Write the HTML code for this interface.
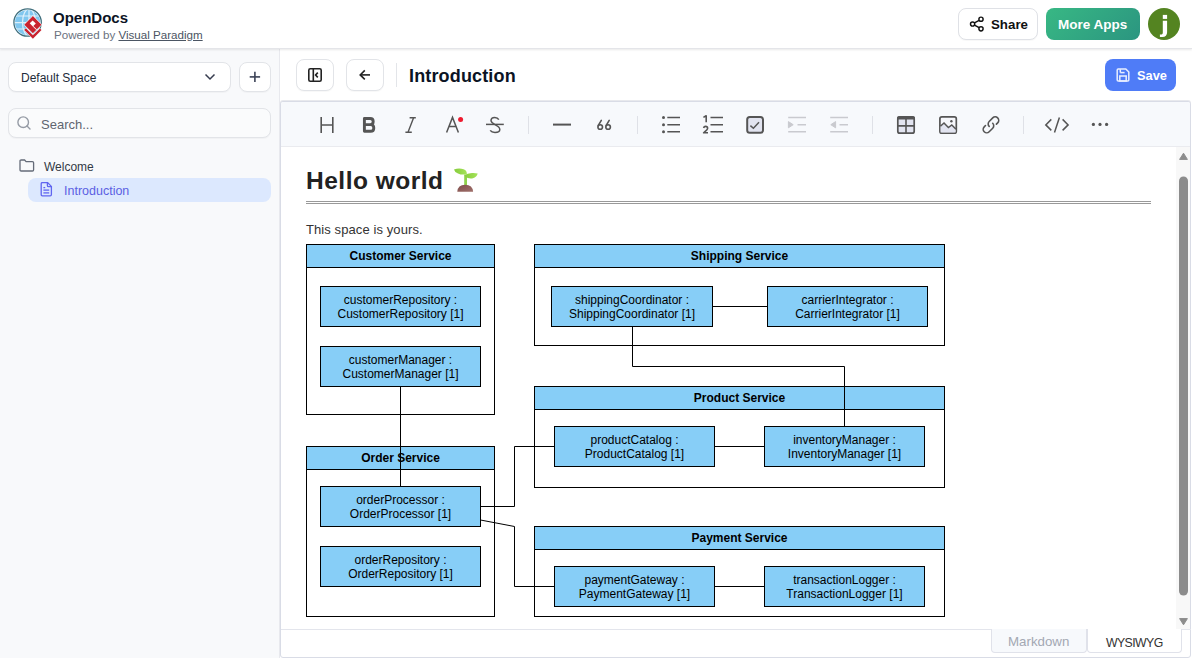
<!DOCTYPE html>
<html><head><meta charset="utf-8">
<style>
*{box-sizing:border-box;margin:0;padding:0}
html,body{width:1192px;height:658px;overflow:hidden;background:#fff;font-family:"Liberation Sans",sans-serif;color:#1f2937}
.abs{position:absolute}
.t{position:absolute;white-space:nowrap;line-height:1}
#header{position:absolute;left:0;top:0;width:1192px;height:49px;background:#fff;border-bottom:1px solid #e4e5e9;box-shadow:0 1px 2px rgba(0,0,0,.09);z-index:2}
#sidebar{position:absolute;left:0;top:49px;width:280px;height:609px;background:#f8f9fb;border-right:1px solid #e8e9ee}
.btn{position:absolute;border:1px solid #e2e4e8;border-radius:8px;background:#fff;box-shadow:0 1px 1px rgba(0,0,0,.03)}
#editor{position:absolute;left:280px;top:101px;width:911px;height:557px;border:1px solid #d9dce6;border-radius:3px;box-shadow:0 -1px 0 #e8e9ed;background:#fff;overflow:hidden}
#toolbar{position:absolute;left:0;top:0;width:910px;height:45px;background:#f7f9fc;border-bottom:1px solid #eaebef}
.div{position:absolute;top:15px;width:1px;height:18px;background:#e1e3e9}
</style></head>
<body>
<div id="header">
  <svg class="abs" style="left:10px;top:5px" width="36" height="36" viewBox="10 5 36 36">
    <defs><clipPath id="gc"><circle cx="27.6" cy="22.5" r="12.6"/></clipPath></defs>
    <circle cx="27.6" cy="22.5" r="13.7" fill="#fff" stroke="#41707e" stroke-width="1.3"/>
    <circle cx="27.6" cy="22.5" r="12.6" fill="#80c7ef"/>
    <g clip-path="url(#gc)" stroke="#dff1fb" stroke-width="1.2" fill="none">
      <ellipse cx="29" cy="22.5" rx="6.5" ry="13.5"/>
      <line x1="29" y1="8" x2="29" y2="37"/>
      <line x1="12" y1="16" x2="42" y2="16"/>
      <line x1="12" y1="22.6" x2="42" y2="22.6"/>
      <line x1="12" y1="29" x2="42" y2="29"/>
    </g>
    <g transform="translate(32.9 24.7) rotate(45)">
      <path d="M-2.6 7.1 H7.1 V-2.5 H10.3 V10.3 H-2.6 Z" fill="#fff"/>
      <rect x="-6.6" y="-6.6" width="13.2" height="13.2" fill="#fff"/>
      <rect x="-6.1" y="-6.1" width="12.2" height="12.2" fill="#c9232f"/>
      <rect x="-3.2" y="-2.9" width="4.4" height="4.2" fill="#fff"/>
      <rect x="1.2" y="0.5" width="5" height="0.8" fill="#fff"/>
      <path d="M-2.4 7.5 H7.5 V-2.3 H9.9 V9.9 H-2.4 Z" fill="#c9232f"/>
    </g>
  </svg>
  <div class="t" style="left:53px;top:10px;font-size:15px;font-weight:bold;color:#0b1324">OpenDocs</div>
  <div class="t" style="left:54px;top:29px;font-size:11.6px;color:#6b7280">Powered by <span style="text-decoration:underline;color:#4b5563">Visual Paradigm</span></div>
  <div class="btn" style="left:958px;top:8px;width:80px;height:32px;border-color:#dfe1e6"></div>
  <svg class="abs" style="left:969px;top:16px" width="16" height="16" viewBox="0 0 16 16" fill="none" stroke="#111" stroke-width="1.45">
    <circle cx="12" cy="3.2" r="2.1"/><circle cx="3.6" cy="8" r="2.1"/><circle cx="12" cy="12.8" r="2.1"/>
    <line x1="5.5" y1="6.9" x2="10.1" y2="4.3"/><line x1="5.5" y1="9.1" x2="10.1" y2="11.7"/>
  </svg>
  <div class="t" style="left:991px;top:18px;font-size:13.3px;font-weight:bold;color:#111">Share</div>
  <div class="abs" style="left:1046px;top:8px;width:94px;height:32px;border-radius:8px;background:linear-gradient(135deg,#38b884,#2b9580)"></div>
  <div class="t" style="left:1058px;top:18px;font-size:13.5px;font-weight:bold;color:#fff">More Apps</div>
  <div class="abs" style="left:1148px;top:8px;width:32px;height:32px;border-radius:50%;background:#548421"></div>
  <svg class="abs" style="left:1148px;top:8px" width="32" height="32" viewBox="1148 8 32 32"><rect x="1162.8" y="14.9" width="4.3" height="4" fill="#fff"/><path d="M1162.8 20.8 H1167.1 V32.2 Q1167.1 36.9 1162.3 36.9 H1159.9 V34.6 H1161.6 Q1162.8 34.6 1162.8 32.8 Z" fill="#fff"/></svg>
</div>

<div id="sidebar">
  <div class="btn" style="left:8px;top:13px;width:223px;height:30px"></div>
  <div class="t" style="left:21px;top:23px;font-size:12px;color:#222b3a">Default Space</div>
  <svg class="abs" style="left:204px;top:24px" width="12" height="8" viewBox="0 0 12 8" fill="none" stroke="#363c4e" stroke-width="1.5"><polyline points="1.5,1.5 6,6 10.5,1.5"/></svg>
  <div class="btn" style="left:239px;top:13px;width:32px;height:30px"></div>
  <svg class="abs" style="left:248px;top:21px" width="14" height="14" viewBox="0 0 14 14" stroke="#3b4256" stroke-width="1.6"><line x1="6.9" y1="1.7" x2="6.9" y2="12.1"/><line x1="1.7" y1="6.9" x2="12.1" y2="6.9"/></svg>
  <div class="btn" style="left:8px;top:59px;width:263px;height:30px;background:#fafbfc"></div>
  <svg class="abs" style="left:16px;top:66px" width="16" height="16" viewBox="0 0 16 16" fill="none" stroke="#959ba5" stroke-width="1.4"><circle cx="7.2" cy="7.2" r="5.3"/><line x1="11" y1="11" x2="14" y2="14" stroke-linecap="round"/></svg>
  <div class="t" style="left:41px;top:69px;font-size:13px;color:#5f6570">Search...</div>
  <svg class="abs" style="left:18.5px;top:110px" width="16" height="13" viewBox="0 0 16 13" fill="none" stroke="#646b78" stroke-width="1.3"><path d="M1 2.2 Q1 1 2.2 1 H5.6 L7.1 2.6 H13.4 Q14.6 2.6 14.6 3.8 V10.8 Q14.6 12 13.4 12 H2.2 Q1 12 1 10.8 Z"/></svg>
  <div class="t" style="left:44px;top:112px;font-size:12px;color:#333a45">Welcome</div>
  <div class="abs" style="left:28px;top:129px;width:243px;height:24px;border-radius:8px;background:#dce8fe"></div>
  <svg class="abs" style="left:40px;top:133px" width="13" height="15" viewBox="0 0 13 15" fill="none" stroke="#6065f0" stroke-width="1.3"><path d="M1.2 1.8 Q1.2 .6 2.4 .6 H7.6 L11.4 4.4 V12.6 Q11.4 13.8 10.2 13.8 H2.4 Q1.2 13.8 1.2 12.6 Z"/><path d="M7.4 .8 V3.4 Q7.4 4.6 8.6 4.6 H11.2"/><line x1="3.4" y1="5.6" x2="5.2" y2="5.6"/><line x1="3.4" y1="8.1" x2="9.2" y2="8.1"/><line x1="3.4" y1="10.9" x2="9.2" y2="10.9"/></svg>
  <div class="t" style="left:64px;top:136px;font-size:12.5px;color:#5b5fe3">Introduction</div>
</div>

<!-- main top bar -->
<div class="btn" style="left:296px;top:59px;width:38px;height:32px"></div>
<svg class="abs" style="left:307px;top:67px" width="16" height="16" viewBox="0 0 16 16" fill="none" stroke="#222" stroke-width="1.6"><rect x="1.8" y="1.8" width="12.4" height="12.4" rx="1.5"/><line x1="6.3" y1="2" x2="6.3" y2="14"/><polyline points="10.8,5.6 8.6,8 10.8,10.4"/></svg>
<div class="btn" style="left:346px;top:59px;width:38px;height:32px"></div>
<svg class="abs" style="left:357px;top:67px" width="16" height="16" viewBox="0 0 16 16" fill="none" stroke="#222" stroke-width="1.6"><line x1="3.2" y1="7.9" x2="13" y2="7.9"/><polyline points="7.8,3.4 3.2,7.9 7.8,12.4"/></svg>
<div class="abs" style="left:396px;top:63px;width:1px;height:24px;background:#e3e5e9"></div>
<div class="t" style="left:409px;top:67px;font-size:18px;font-weight:bold;color:#0b1324;letter-spacing:0.15px">Introduction</div>
<div class="abs" style="left:1105px;top:59px;width:71px;height:32px;border-radius:8px;background:#4f7cf7"></div>
<svg class="abs" style="left:1115px;top:67px" width="16" height="16" viewBox="0 0 16 16" fill="none" stroke="#e8eeff" stroke-width="1.5"><path d="M2.2 3 Q2.2 2 3.2 2 H10.8 L13.8 5 V13 Q13.8 14 12.8 14 H3.2 Q2.2 14 2.2 13 Z"/><rect x="4.8" y="9" width="6.4" height="5"/><line x1="5.3" y1="2.2" x2="5.3" y2="5.6"/><line x1="5.3" y1="5.6" x2="9.6" y2="5.6"/></svg>
<div class="t" style="left:1137px;top:69.5px;font-size:12.8px;font-weight:bold;color:#fff">Save</div>

<div id="editor">
  <div id="toolbar">
  </div>
</div>
<svg class="abs" style="left:281px;top:101px" width="910" height="45" viewBox="281 101 910 45" fill="none" stroke="#555" stroke-width="1.5">
<!-- H -->
<path d="M321.2 117 V133 M332.8 117 V133 M321.2 125 H332.8" stroke-width="1.6"/>
<!-- B -->
<path d="M364.4 118.5 H370.2 Q373.2 118.5 373.2 121.5 Q373.2 124.6 370.2 124.6 H364.4 Z M364.4 124.6 H370.6 Q373.8 124.6 373.8 127.9 Q373.8 131.3 370.6 131.3 H364.4 Z" stroke-width="2.9" stroke-linejoin="round"/>
<!-- I -->
<path d="M409.6 117.7 H415.8 M405.4 132.2 H411.8 M413.6 117.7 L408 132.2" stroke-width="1.4"/>
<!-- A -->
<path d="M446.6 132.4 L452.5 117.4 L458.4 132.4 M448.7 126.6 H456.3" stroke-width="1.5"/>
<circle cx="460.6" cy="119.5" r="2.5" fill="#ee1b2f" stroke="none"/>
<!-- S strike -->
<path d="M486 124.4 H503.8" stroke-width="1.5"/>
<path d="M498.8 119.6 Q497.6 117.4 494.8 117.4 Q491 117.4 491 120.6 Q491 122.4 494.6 124.4 Q499.8 127 499.8 129.4 Q499.8 132.4 495 132.4 Q491.6 132.4 490.2 130.4" stroke-width="1.5"/>
<!-- divider -->
<path d="M528.5 116 V134" stroke="#dfe1e7" stroke-width="1"/>
<!-- hr -->
<path d="M553 124.6 H571" stroke-width="2"/>
<!-- divider -->
<path d="M637.5 116 V134" stroke="#dfe1e7" stroke-width="1"/>
<!-- bullet list -->
<g fill="#555" stroke="none"><circle cx="663.5" cy="117.5" r="1.5"/><circle cx="663.5" cy="124.7" r="1.5"/><circle cx="663.5" cy="131.7" r="1.5"/></g>
<path d="M667.3 117.5 H680 M667.3 124.7 H680 M667.3 131.7 H680" stroke-width="1.6"/>
<!-- ordered list -->
<path d="M710.5 117.5 H723 M710.5 124.7 H723 M710.5 131.7 H723" stroke-width="1.6"/>
<path d="M703.4 117.4 L706.2 115.8 V122.3" stroke-width="1.6" stroke-linejoin="round"/>
<path d="M703.6 128 Q704 126.4 705.6 126.4 Q707.6 126.4 707.6 128.2 Q707.6 129.6 703.6 132.8 H708" stroke-width="1.6" stroke-linejoin="round"/>
<!-- checkbox -->
<rect x="747.2" y="117" width="15.8" height="15.8" rx="2.6" fill="#e2e4f0" stroke-width="2"/>
<path d="M750.4 125.6 L753.4 128.3 L759 122.3" stroke-width="1.5"/>
<!-- indent (disabled) -->
<g stroke="#c9cacf"><path d="M788.2 117.5 H806 M797.5 124.7 H806 M788.2 131.7 H806" stroke-width="1.6"/>
<path d="M788.4 121.6 L793.2 124.7 L788.4 127.8 Z" fill="#c9cacf" stroke-width="1"/></g>
<g stroke="#c9cacf"><path d="M830.2 117.5 H848 M839.5 124.7 H848 M830.2 131.7 H848" stroke-width="1.6"/>
<path d="M835.6 121.6 L830.8 124.7 L835.6 127.8 Z" fill="#c9cacf" stroke-width="1"/></g>
<!-- divider -->
<path d="M872.5 116 V134" stroke="#dfe1e7" stroke-width="1"/>
<!-- table -->
<rect x="897.8" y="116.8" width="16.4" height="16.4" rx="2" fill="#e2e4f0" stroke-width="1.7"/>
<path d="M898.5 116.2 H913.5 Q915 116.2 915 117.7 V119.6 H897 V117.7 Q897 116.2 898.5 116.2 Z" fill="#555" stroke="none"/>
<path d="M906 119 V133 M898 125.9 H914" stroke-width="1.6"/>
<!-- image -->
<rect x="939.9" y="116.8" width="16.4" height="16.4" rx="2" fill="#f6f7fb" stroke-width="1.7"/>
<path d="M940.6 126 L944 123 L948.4 127.6 L951.8 125 L955.6 128.8 V132.4 H940.6 Z" fill="#e2e4f0" stroke="none"/>
<path d="M940.4 126.2 L944 123 L948.4 127.6 L951.8 125 L956 129.2" stroke-width="1.5"/>
<circle cx="951.4" cy="121.3" r="1.2" fill="#555" stroke="none"/>
<!-- link -->
<g stroke-width="1.6" stroke-linecap="round" fill="none">
<path id="lk" transform="translate(995.2 120.4) rotate(-45)" d="M-8.5 0 A3.5 3.5 0 0 1 -5 -3.5 H0 A3.5 3.5 0 0 1 0 3.5 H-1.8"/>
<path transform="rotate(180 990.95 124.85) translate(995.2 120.4) rotate(-45)" d="M-8.5 0 A3.5 3.5 0 0 1 -5 -3.5 H0 A3.5 3.5 0 0 1 0 3.5 H-1.8"/>
</g>
<!-- divider -->
<path d="M1023.5 116 V134" stroke="#dfe1e7" stroke-width="1"/>
<!-- code -->
<path d="M1051.3 119.4 L1045.8 124.9 L1051.3 130.4 M1062.6 119.4 L1068.1 124.9 L1062.6 130.4 M1059.4 117.4 L1054.5 132.4" stroke-width="1.5"/>
<!-- more -->
<g fill="#555" stroke="none"><circle cx="1093.4" cy="124.4" r="1.6"/><circle cx="1100" cy="124.4" r="1.6"/><circle cx="1106.6" cy="124.4" r="1.6"/></g>
<g stroke-width="1.6" stroke-linecap="round"><circle cx="600.2" cy="127" r="2.3"/><path d="M601.3 120.4 L598.3 125.4"/><circle cx="608.1" cy="127" r="2.3"/><path d="M609.2 120.4 L606.2 125.4"/></g>
</svg>
<svg class="abs" style="left:296px;top:236px" width="660" height="390" viewBox="296 236 660 390" font-family="Liberation Sans, sans-serif" font-size="12">
<rect x="306.5" y="244.5" width="188" height="170" fill="#fff" stroke="#000"/>
<rect x="306.5" y="244.5" width="188" height="23" fill="#87cef7" stroke="#000"/>
<text x="400.5" y="259.7" text-anchor="middle" font-weight="bold">Customer Service</text>
<rect x="306.5" y="446.5" width="188" height="170" fill="#fff" stroke="#000"/>
<rect x="306.5" y="446.5" width="188" height="23" fill="#87cef7" stroke="#000"/>
<text x="400.5" y="461.7" text-anchor="middle" font-weight="bold">Order Service</text>
<rect x="534.5" y="244.5" width="410" height="101" fill="#fff" stroke="#000"/>
<rect x="534.5" y="244.5" width="410" height="23" fill="#87cef7" stroke="#000"/>
<text x="739.5" y="259.7" text-anchor="middle" font-weight="bold">Shipping Service</text>
<rect x="534.5" y="386.5" width="410" height="101" fill="#fff" stroke="#000"/>
<rect x="534.5" y="386.5" width="410" height="23" fill="#87cef7" stroke="#000"/>
<text x="739.5" y="401.7" text-anchor="middle" font-weight="bold">Product Service</text>
<rect x="534.5" y="526.5" width="410" height="90" fill="#fff" stroke="#000"/>
<rect x="534.5" y="526.5" width="410" height="23" fill="#87cef7" stroke="#000"/>
<text x="739.5" y="541.7" text-anchor="middle" font-weight="bold">Payment Service</text>
<polyline points="400.5,386.5 400.5,486.5" fill="none" stroke="#000"/>
<polyline points="712.5,306.5 767.5,306.5" fill="none" stroke="#000"/>
<polyline points="632.5,326.5 632.5,366.5 844.5,366.5 844.5,426.5" fill="none" stroke="#000"/>
<polyline points="714.5,446.5 764.5,446.5" fill="none" stroke="#000"/>
<polyline points="480.5,506.5 514.5,506.5 514.5,446.5 554.5,446.5" fill="none" stroke="#000"/>
<polyline points="714.5,586.5 764.5,586.5" fill="none" stroke="#000"/>
<polyline points="480.5,520 514.5,526.5 514.5,586.5 554.5,586.5" fill="none" stroke="#000"/>
<rect x="320.5" y="286.5" width="160" height="40" fill="#87cef7" stroke="#000"/>
<text x="400.5" y="304" text-anchor="middle">customerRepository :</text>
<text x="400.5" y="318" text-anchor="middle">CustomerRepository [1]</text>
<rect x="320.5" y="346.5" width="160" height="40" fill="#87cef7" stroke="#000"/>
<text x="400.5" y="364" text-anchor="middle">customerManager :</text>
<text x="400.5" y="378" text-anchor="middle">CustomerManager [1]</text>
<rect x="320.5" y="486.5" width="160" height="40" fill="#87cef7" stroke="#000"/>
<text x="400.5" y="504" text-anchor="middle">orderProcessor :</text>
<text x="400.5" y="518" text-anchor="middle">OrderProcessor [1]</text>
<rect x="320.5" y="546.5" width="160" height="40" fill="#87cef7" stroke="#000"/>
<text x="400.5" y="564" text-anchor="middle">orderRepository :</text>
<text x="400.5" y="578" text-anchor="middle">OrderRepository [1]</text>
<rect x="551.5" y="286.5" width="161" height="40" fill="#87cef7" stroke="#000"/>
<text x="632.0" y="304" text-anchor="middle">shippingCoordinator :</text>
<text x="632.0" y="318" text-anchor="middle">ShippingCoordinator [1]</text>
<rect x="767.5" y="286.5" width="160" height="40" fill="#87cef7" stroke="#000"/>
<text x="847.5" y="304" text-anchor="middle">carrierIntegrator :</text>
<text x="847.5" y="318" text-anchor="middle">CarrierIntegrator [1]</text>
<rect x="554.5" y="426.5" width="160" height="40" fill="#87cef7" stroke="#000"/>
<text x="634.5" y="444" text-anchor="middle">productCatalog :</text>
<text x="634.5" y="458" text-anchor="middle">ProductCatalog [1]</text>
<rect x="764.5" y="426.5" width="160" height="40" fill="#87cef7" stroke="#000"/>
<text x="844.5" y="444" text-anchor="middle">inventoryManager :</text>
<text x="844.5" y="458" text-anchor="middle">InventoryManager [1]</text>
<rect x="554.5" y="566.5" width="160" height="40" fill="#87cef7" stroke="#000"/>
<text x="634.5" y="584" text-anchor="middle">paymentGateway :</text>
<text x="634.5" y="598" text-anchor="middle">PaymentGateway [1]</text>
<rect x="764.5" y="566.5" width="160" height="40" fill="#87cef7" stroke="#000"/>
<text x="844.5" y="584" text-anchor="middle">transactionLogger :</text>
<text x="844.5" y="598" text-anchor="middle">TransactionLogger [1]</text>
</svg>
<!-- content -->
<div class="t" style="left:306px;top:169px;font-size:24.5px;font-weight:bold;color:#222;letter-spacing:0.5px">Hello world</div>
<svg class="abs" style="left:452px;top:167px" width="28" height="26" viewBox="0 0 28 26">
  <defs><linearGradient id="sg" x1="0" y1="0" x2="1" y2="1"><stop offset="0" stop-color="#7e4c4a"/><stop offset="1" stop-color="#a0706b"/></linearGradient>
  <linearGradient id="lg" x1="0" y1="0" x2="1" y2="0"><stop offset="0" stop-color="#86cc3c"/><stop offset="1" stop-color="#a5e35a"/></linearGradient></defs>
  <rect x="12.2" y="7.5" width="2.8" height="11" fill="#8fd24c"/>
  <path d="M2 2.4 Q7 0.8 11.6 2.2 Q15 3.4 14.9 7.3 Q9.6 8.2 6 6.4 Q2.4 4.8 2 2.4 Z" fill="url(#lg)"/>
  <path d="M12.4 8.8 Q15.2 6.2 20 6.1 Q23.6 6 25.7 6.4 Q24.7 10 21 11.3 Q16 12.3 12.4 8.8 Z" fill="url(#lg)"/>
  <path d="M5.3 24.8 Q5.7 17.8 13.2 17.8 Q20.7 17.8 21.1 24.8 Z" fill="url(#sg)"/>
</svg>
<div class="abs" style="left:306px;top:201px;width:845px;height:1px;background:#999"></div>
<div class="abs" style="left:306px;top:203px;width:845px;height:1px;background:#999"></div>
<div class="t" style="left:306px;top:223px;font-size:13px;color:#333;letter-spacing:0.09px">This space is yours.</div>
<!-- scrollbar -->
<div class="abs" style="left:1176px;top:147px;width:14px;height:482px;background:#f8f8f8"></div>
<svg class="abs" style="left:1176px;top:147px" width="14" height="482" viewBox="1176 147 14 482">
  <path d="M1179.6 159.4 L1183.5 153.2 L1187.4 159.4 Z" fill="#8c8c8c" stroke="#8c8c8c" stroke-width="1" stroke-linejoin="round"/>
  <rect x="1179" y="176.5" width="9" height="419" rx="4.5" fill="#8c8c8c"/>
  <path d="M1179.6 618.6 L1183.5 624.8 L1187.4 618.6 Z" fill="#8c8c8c" stroke="#8c8c8c" stroke-width="1" stroke-linejoin="round"/>
</svg>
<!-- bottom bar -->
<div class="abs" style="left:281px;top:629px;width:910px;height:1px;background:#e3e5ec"></div>
<div class="abs" style="left:991px;top:629px;width:96px;height:24px;background:#f7f9fc;border:1px solid #e0e2ea;border-top:none;border-radius:0 0 4px 4px"></div>
<div class="abs" style="left:1087px;top:629px;width:95px;height:24px;background:#fff;border:1px solid #e0e2ea;border-top:none;border-radius:0 0 4px 4px"></div>
<div class="t" style="left:1008px;top:635px;font-size:13.3px;color:#a3a8b3">Markdown</div>
<div class="t" style="left:1106px;top:637px;font-size:12.3px;color:#333;letter-spacing:-0.6px">WYSIWYG</div>

</body></html>
